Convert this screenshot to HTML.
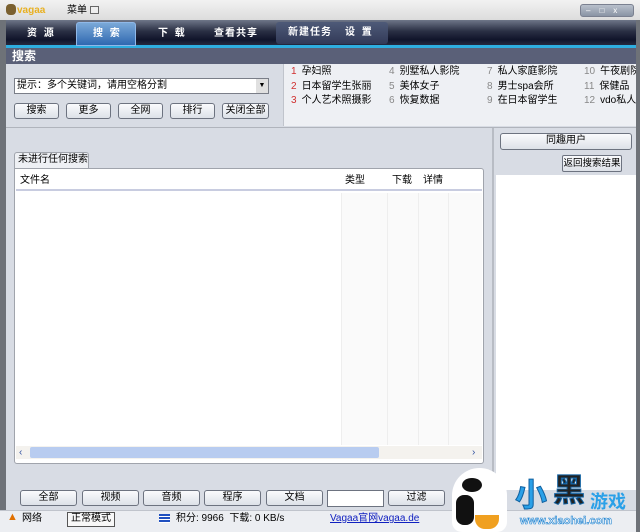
<!DOCTYPE html>
<html><head><meta charset="utf-8"><style>
*{margin:0;padding:0;box-sizing:border-box}
body{width:640px;height:532px;overflow:hidden;background:#6e7278;font-family:"Liberation Sans","Noto Sans CJK SC",sans-serif;font-size:11px;color:#000;position:relative;line-height:13px;white-space:nowrap}
.a{position:absolute}
.btn{position:absolute;background:linear-gradient(#fafbfd,#dde1e8);border:1px solid #6d7380;border-radius:3px;text-align:center;line-height:14px;height:16px;font-size:10px;overflow:hidden}
.tab{position:absolute;top:27px;color:#fff;font-size:10px;font-weight:bold;letter-spacing:2px}
.hot{position:absolute;font-size:10px;line-height:14.5px}
.hot b{font-weight:normal;color:#888;margin-right:5px}
.hot b.r{color:#d03030}
</style></head><body>
<div class="a" style="left:0;top:0;width:640px;height:20px;background:linear-gradient(#f2f2f2,#dcdcdc)"></div>
<div class="a" style="left:6px;top:4px;width:10px;height:11px;background:#7a6030;border-radius:4px"></div>
<div class="a" style="left:17px;top:4px;color:#e8b020;font-weight:bold;font-size:10px">vagaa</div>
<div class="a" style="left:67px;top:4px;font-size:10px">菜单</div>
<div class="a" style="left:90px;top:6px;width:9px;height:8px;border:1px solid #666;background:#eee"></div>
<div class="a" style="left:580px;top:4px;width:54px;height:13px;background:linear-gradient(#b8c0cc,#8a94a4);border-radius:3px;border:1px solid #7a8090"></div>
<div class="a" style="left:586px;top:4px;color:#fff;font-size:8px;letter-spacing:9px">–□x</div>
<div class="a" style="left:6px;top:20px;width:630px;height:28px;background:linear-gradient(#6e7688,#2a2f44 40%,#10142a 70%,#30364c)"></div>
<div class="a" style="left:6px;top:45px;width:630px;height:3px;background:#2eaee0"></div>
<div class="a" style="left:76px;top:22px;width:60px;height:24px;background:linear-gradient(#7aa8d8,#2f68b0);border:1px solid #90b8e8;border-radius:3px 3px 0 0"></div>
<div class="a" style="left:276px;top:22px;width:112px;height:22px;background:linear-gradient(#4e5a78,#323a58);border-radius:3px"></div>
<div class="tab" style="left:27px">资 源</div>
<div class="tab" style="left:93px">搜 索</div>
<div class="tab" style="left:158px">下 载</div>
<div class="tab" style="left:214px;letter-spacing:1px">查看共享</div>
<div class="tab" style="left:288px;top:26px;letter-spacing:1px">新建任务</div>
<div class="tab" style="left:345px;top:26px">设 置</div>
<div class="a" style="left:6px;top:48px;width:630px;height:16px;background:#5a6078"></div>
<div class="a" style="left:12px;top:49px;color:#fff;font-weight:bold;font-size:12px;line-height:14px">搜索</div>
<div class="a" style="left:6px;top:64px;width:630px;height:64px;background:#d8dce4;border-bottom:1px solid #b0b4bc"></div>
<div class="a" style="left:14px;top:78px;width:255px;height:16px;background:#fff;border:1px solid #7a7e88;font-size:10px;line-height:13px;padding-left:2px">提示：多个关键词，请用空格分割</div>
<div class="a" style="left:256px;top:79px;width:12px;height:14px;background:#e0e0e0;font-size:7px;text-align:center;line-height:14px">▼</div>
<div class="btn" style="left:14px;top:103px;width:45px">搜索</div>
<div class="btn" style="left:66px;top:103px;width:45px">更多</div>
<div class="btn" style="left:118px;top:103px;width:45px">全网</div>
<div class="btn" style="left:170px;top:103px;width:45px">排行</div>
<div class="btn" style="left:222px;top:103px;width:47px">关闭全部</div>
<div class="a" style="left:283px;top:64px;width:353px;height:62px;background:#eef0f4;border-left:1px solid #c0c4cc"></div>
<div class="hot" style="left:291px;top:65px"><b class="r">1</b>孕妇照<br><b class="r">2</b>日本留学生张丽<br><b class="r">3</b>个人艺术照摄影</div>
<div class="hot" style="left:389px;top:65px"><b>4</b>别墅私人影院<br><b>5</b>美体女子<br><b>6</b>恢复数据</div>
<div class="hot" style="left:487px;top:65px"><b>7</b>私人家庭影院<br><b>8</b>男士spa会所<br><b>9</b>在日本留学生</div>
<div class="hot" style="left:584px;top:65px;width:52px;overflow:hidden"><b>10</b>午夜剧院<br><b>11</b>保健品<br><b>12</b>vdo私人电</div>
<div class="a" style="left:6px;top:128px;width:630px;height:382px;background:#d8dce4"></div>
<div class="a" style="left:14px;top:152px;width:75px;height:17px;background:#eef0f4;border:1px solid #a0a4ac;border-bottom:none;border-radius:3px 3px 0 0;font-size:10px;line-height:13px;padding-left:3px">未进行任何搜索</div>
<div class="a" style="left:14px;top:168px;width:470px;height:296px;background:#fff;border:1px solid #a0a4ac;border-radius:0 3px 3px 3px"></div>
<div class="a" style="left:16px;top:170px;width:466px;height:21px;background:#fff;border-bottom:2px solid #c8cce0"></div>
<div class="a" style="left:20px;top:174px;font-size:10px">文件名</div>
<div class="a" style="left:345px;top:174px;font-size:10px">类型</div>
<div class="a" style="left:392px;top:174px;font-size:10px">下载</div>
<div class="a" style="left:423px;top:174px;font-size:10px">详情</div>
<div class="a" style="left:341px;top:193px;width:141px;height:252px;background:#fafafa;border-left:1px solid #eee"></div>
<div class="a" style="left:387px;top:193px;width:1px;height:252px;background:#eee"></div>
<div class="a" style="left:418px;top:193px;width:1px;height:252px;background:#eee"></div>
<div class="a" style="left:448px;top:193px;width:1px;height:252px;background:#eee"></div>
<div class="a" style="left:16px;top:446px;width:466px;height:13px;background:#f4f2ee"></div>
<div class="a" style="left:30px;top:447px;width:349px;height:11px;background:#b8ccf0;border-radius:2px"></div>
<div class="a" style="left:19px;top:446px;color:#3050a0;font-size:10px">‹</div>
<div class="a" style="left:472px;top:446px;color:#3050a0;font-size:10px">›</div>
<div class="a" style="left:492px;top:128px;width:2px;height:382px;background:#b8bcc4"></div>
<div class="btn" style="left:500px;top:133px;width:132px;height:17px">同趣用户</div>
<div class="btn" style="left:562px;top:155px;width:60px;height:17px;border-radius:2px;font-size:9.5px;line-height:15px">返回搜索结果</div>
<div class="a" style="left:496px;top:175px;width:140px;height:315px;background:#fff"></div>
<div class="btn" style="left:20px;top:490px;width:57px">全部</div>
<div class="btn" style="left:82px;top:490px;width:57px">视频</div>
<div class="btn" style="left:143px;top:490px;width:57px">音频</div>
<div class="btn" style="left:204px;top:490px;width:57px">程序</div>
<div class="btn" style="left:266px;top:490px;width:57px">文档</div>
<div class="a" style="left:327px;top:490px;width:57px;height:17px;background:#fff;border:1px solid #6d7380"></div>
<div class="btn" style="left:388px;top:490px;width:57px">过滤</div>
<div class="a" style="left:0;top:510px;width:640px;height:22px;background:#eceef2;border-top:1px solid #c0c4cc"></div>
<div class="a" style="left:7px;top:511px;color:#e07000;font-size:11px">▲</div>
<div class="a" style="left:22px;top:512px;font-size:10px">网络</div>
<div class="a" style="left:67px;top:512px;width:48px;height:15px;border:1px solid #555;background:#f8f8f8;font-size:10px;text-align:center;line-height:12px">正常模式</div>
<div class="a" style="left:159px;top:514px;width:11px;height:9px;background:repeating-linear-gradient(#2050c0 0 2px,#fff 2px 3px)"></div>
<div class="a" style="left:176px;top:512px;font-size:10px">积分: 9966 &nbsp;下载: 0 KB/s</div>
<div class="a" style="left:330px;top:512px;font-size:10px;color:#1020c0;text-decoration:underline">Vagaa官网vagaa.de</div>
<div class="a" style="left:452px;top:468px;width:55px;height:64px;background:#fff;border-radius:28px 28px 10px 10px"></div>
<div class="a" style="left:462px;top:478px;width:20px;height:14px;background:#111;border-radius:50%"></div>
<div class="a" style="left:456px;top:495px;width:18px;height:30px;background:#111;border-radius:8px"></div>
<div class="a" style="left:475px;top:515px;width:24px;height:14px;background:#f0a020;border-radius:0 0 10px 10px"></div>
<div class="a" style="left:515px;top:478px;color:#2aa0e8;font-size:32px;line-height:34px;font-weight:bold;-webkit-text-stroke:1px #1060a0">小</div>
<div class="a" style="left:553px;top:473px;color:#222;font-size:32px;line-height:34px;font-weight:bold;-webkit-text-stroke:1px #1060a0">黑</div>
<div class="a" style="left:590px;top:492px;color:#2aa0e8;font-size:18px;line-height:20px;font-weight:bold">游戏</div>
<div class="a" style="left:520px;top:515px;color:#fff;font-size:11px;font-weight:bold;-webkit-text-stroke:0.6px #1a80d0">www.xiaohei.com</div>
<div class="a" style="left:636px;top:20px;width:4px;height:512px;background:#6e7278"></div>
</body></html>
